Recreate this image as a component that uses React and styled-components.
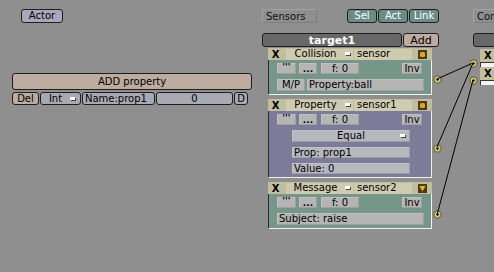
import React from 'react';
import styled, { createGlobalStyle, css } from 'styled-components';

const GlobalStyle = createGlobalStyle`
  html, body { margin: 0; padding: 0; background: #8f8f8f; }
  body { font-family: "DejaVu Sans", "Liberation Sans", sans-serif; font-size: 10px; color: #000; }
`;

const tones = {
  actor: '#aba6bd',
  tan: '#bdac9f',
  field: '#a8a9b3',
  teal: '#6b8d86',
  dark: '#686868',
  khaki: '#ccc9ae',
  flat: '#b4b5b4',
  lilac: '#b7b7bf',
};

const Canvas = styled.div`
  position: relative;
  width: 494px;
  height: 272px;
  overflow: hidden;
  display: flex;
  background: #8f8f8f;
`;

const LeftCol = styled.div`
  width: 262px;
  flex-shrink: 0;
  display: flex;
  flex-direction: column;
  padding-top: 9px;
`;

const Btn = styled.div`
  box-sizing: border-box;
  width: ${p => p.$w}px;
  height: ${p => p.$h || 13}px;
  flex-shrink: 0;
  display: flex;
  align-items: center;
  justify-content: ${p => (p.$left ? 'flex-start' : 'center')};
  padding: 0 ${p => (p.$left ? 2 : 0)}px;
  background: ${p => tones[p.$tone || 'field']};
  border: 1px solid #1e1e1e;
  border-radius: 3px;
  color: ${p => (p.$tone === 'teal' || p.$tone === 'dark' ? '#fff' : '#000')};
  white-space: nowrap;
  overflow: hidden;
  position: relative;
  line-height: 1;
  ${p => p.$bold && css`font-weight: bold;`}
  ${p => p.$flat && css`
    border: none;
    border-radius: 0;
    box-shadow: inset -1px -1px 0 rgba(0,0,0,0.12), inset 1px 1px 0 rgba(255,255,255,0.15);
  `}
`;

const PulseBtn = styled(Btn)`
  align-items: ${p => (p.$low ? 'flex-end' : 'flex-start')};
  font-weight: bold;
  font-size: 9px;
  line-height: 9px;
  overflow: visible;
`;

const MenuMark = styled.span`
  position: absolute;
  right: ${p => p.$r || 5}px;
  top: 50%;
  margin-top: -2px;
  width: 5px;
  height: 3px;
  background: #fff;
  box-shadow: 1px 1px 0 #444;
`;

const ActorRow = styled.div`
  padding-left: 21px;
`;

const PropBlock = styled.div`
  margin-top: 50px;
  padding-left: 12px;
  display: flex;
  flex-direction: column;
  gap: 2px;
`;

const PropRow = styled.div`
  display: flex;
  gap: 1px;
`;

const SensorsCol = styled.div`
  width: 211px;
  flex-shrink: 0;
  padding-top: 9px;
  display: flex;
  flex-direction: column;
`;

const HeadRow = styled.div`
  display: flex;
  align-items: center;
  height: 14px;
`;

const Label = styled.div`
  box-sizing: border-box;
  width: ${p => p.$w}px;
  height: 14px;
  display: flex;
  align-items: center;
  padding-left: 3px;
  border: 1px solid #a3a3a3;
  border-right-color: #7d7d7d;
  border-bottom-color: #7d7d7d;
  color: #111;
  white-space: nowrap;
  overflow: hidden;
`;

const Group = styled.div`
  display: flex;
  gap: 1px;
  margin-left: 30px;
`;

const TargetRow = styled.div`
  display: flex;
  gap: 1px;
  margin-top: 10px;
`;

const SensorList = styled.div`
  display: flex;
  flex-direction: column;
  gap: 4px;
  margin: 1px 0 0 6px;
`;

const SensorBox = styled.div`
  position: relative;
  width: 164px;
`;

const SensorHead = styled.div`
  box-sizing: border-box;
  height: 12px;
  display: flex;
  align-items: center;
  background: #c1be9f;
  padding-right: 5px;
`;

const Close = styled.div`
  width: 15px;
  height: 12px;
  display: flex;
  align-items: center;
  justify-content: center;
  font-weight: bold;
  font-size: 10px;
  margin-right: 3px;
`;

const HeadField = styled.div`
  box-sizing: border-box;
  width: ${p => p.$w}px;
  height: 11px;
  display: flex;
  align-items: center;
  justify-content: ${p => (p.$left ? 'flex-start' : 'center')};
  padding-left: ${p => (p.$left ? 3 : 0)}px;
  padding-right: ${p => (p.$left ? 0 : 8)}px;
  margin-right: 1px;
  background: #cfcbb1;
  position: relative;
  line-height: 1;
`;

const Spacer = styled.div`
  flex: 1;
`;

const SensorBody = styled.div`
  box-sizing: border-box;
  background: ${p => (p.$kind === 'purple' ? '#7c7c99' : '#76968a')};
  border-left: 1px solid #2c2c2c;
  border-right: 1px solid #f0f0f0;
  border-bottom: 1px solid #f0f0f0;
  padding: 3px 9px 3px 8px;
  display: flex;
  flex-direction: column;
  gap: ${p => p.$gap || 5}px;
`;

const BodyRow = styled.div`
  display: flex;
  align-items: center;
  gap: ${p => p.$gap || 0}px;
  padding-left: ${p => p.$indent || 0}px;
`;

const Dot = styled.div`
  position: absolute;
  left: ${p => p.$x}px;
  top: ${p => p.$y}px;
  width: 7px;
  height: 7px;
  border-radius: 50%;
  background: radial-gradient(circle at 50% 50%, #2a2a14 0 1px, #d6cf86 1.5px 2.3px, #8e8840 3px);
  box-shadow: 0 0 0 0.5px #5a5628;
`;

const CtrlCol = styled.div`
  flex: 1;
  padding-top: 9px;
  display: flex;
  flex-direction: column;
`;

const CtrlLabel = styled(Label)`
  width: 30px;
  border-right: none;
`;

const CtrlBar = styled.div`
  margin-top: 10px;
  height: 14px;
  box-sizing: border-box;
  width: 40px;
  background: #686868;
  border: 1px solid #1e1e1e;
  border-radius: 3px;
`;

const CtrlStack = styled.div`
  margin: 2px 0 0 7px;
  display: flex;
  flex-direction: column;
`;

const CtrlHead = styled.div`
  height: 13px;
  width: 30px;
  background: #c1be9f;
  display: flex;
  align-items: center;
  padding-left: 4px;
  box-sizing: border-box;
  font-weight: bold;
`;

const CtrlBody = styled.div`
  height: 4px;
  width: 30px;
  background: #f4f4f4;
  border-top: 1px solid #333;
  border-left: 1px solid #333;
`;

const Wires = styled.svg`
  position: absolute;
  left: 0;
  top: 0;
  pointer-events: none;
`;

const StateIcon = ({ down }) => (
  <svg width="9" height="9" viewBox="0 0 9 9">
    <rect x="0" y="0" width="9" height="9" fill="#4a3c18" />
    {down ? (
      <path d="M1.5 2 L7.5 2 L4.5 7.5 Z" fill="#e8b62a" />
    ) : (
      <rect x="2" y="2" width="5" height="5" rx="1.5" fill="#e0a42a" />
    )}
  </svg>
);

const PulseRow = () => (
  <BodyRow>
    <PulseBtn $flat $tone="flat" $w={19} $h={11}>'''</PulseBtn>
    <PulseBtn $flat $low $tone="flat" $w={18} $h={11} style={{ marginLeft: 3 }}>...</PulseBtn>
    <Btn $flat $tone="flat" $w={38} $h={11} style={{ marginLeft: 4 }}>f: 0</Btn>
    <Spacer />
    <Btn $flat $tone="flat" $w={20} $h={11}>Inv</Btn>
  </BodyRow>
);

const SensorHeader = ({ type, name, typeW, down }) => (
  <SensorHead>
    <Close>X</Close>
    <HeadField $w={typeW}>
      {type}
      <MenuMark $r={3} />
    </HeadField>
    <HeadField $w={58} $left>{name}</HeadField>
    <Spacer />
    <StateIcon down={down} />
  </SensorHead>
);

export default function App() {
  return (
    <>
      <GlobalStyle />
      <Canvas>
        <LeftCol>
          <ActorRow>
            <Btn $tone="actor" $w={42} $h={14}>Actor</Btn>
          </ActorRow>
          <PropBlock>
            <Btn $tone="tan" $w={240} $h={17}>ADD property</Btn>
            <PropRow>
              <Btn $tone="tan" $w={27}>Del</Btn>
              <Btn $w={41}>
                <span style={{ marginRight: 10 }}>Int</span>
                <MenuMark />
              </Btn>
              <Btn $w={73} $left>Name:prop1</Btn>
              <Btn $w={77}>0</Btn>
              <Btn $w={14}>D</Btn>
            </PropRow>
          </PropBlock>
        </LeftCol>

        <SensorsCol>
          <HeadRow>
            <Label $w={55}>Sensors</Label>
            <Group>
              <Btn $tone="teal" $w={30} $h={14}>Sel</Btn>
              <Btn $tone="teal" $w={30} $h={14}>Act</Btn>
              <Btn $tone="teal" $w={30} $h={14}>Link</Btn>
            </Group>
          </HeadRow>
          <TargetRow>
            <Btn $tone="dark" $bold $w={140} $h={14} style={{ fontSize: 11 }}>target1</Btn>
            <Btn $tone="tan" $w={36} $h={14} style={{ fontSize: 11 }}>Add</Btn>
          </TargetRow>
          <SensorList>
            <SensorBox>
              <SensorHeader type="Collision" name="sensor" typeW={67} />
              <SensorBody>
                <PulseRow />
                <BodyRow $gap={2}>
                  <Btn $flat $tone="flat" $w={28} $h={12}>M/P</Btn>
                  <Btn $flat $tone="flat" $w={117} $h={12} $left>Property:ball</Btn>
                </BodyRow>
              </SensorBody>
              <Dot $x={166} $y={28} />
            </SensorBox>

            <SensorBox>
              <SensorHeader type="Property" name="sensor1" typeW={67} />
              <SensorBody $kind="purple" $gap={5}>
                <PulseRow />
                <BodyRow $indent={15}>
                  <Btn $flat $tone="lilac" $w={118} $h={12}>
                    Equal
                    <MenuMark $r={5} />
                  </Btn>
                </BodyRow>
                <BodyRow $indent={15}>
                  <Btn $flat $tone="lilac" $w={118} $h={11} $left>Prop: prop1</Btn>
                </BodyRow>
                <BodyRow $indent={15}>
                  <Btn $flat $tone="lilac" $w={118} $h={11} $left>Value: 0</Btn>
                </BodyRow>
              </SensorBody>
              <Dot $x={166} $y={46} />
            </SensorBox>

            <SensorBox>
              <SensorHeader type="Message" name="sensor2" typeW={67} down />
              <SensorBody>
                <PulseRow />
                <BodyRow>
                  <Btn $flat $tone="flat" $w={147} $h={12} $left>Subject: raise</Btn>
                </BodyRow>
              </SensorBody>
              <Dot $x={166} $y={29} />
            </SensorBox>
          </SensorList>
        </SensorsCol>

        <CtrlCol>
          <CtrlLabel>Con</CtrlLabel>
          <CtrlBar />
          <CtrlStack>
            <CtrlHead>X</CtrlHead>
            <CtrlBody />
            <CtrlHead>X</CtrlHead>
            <CtrlBody />
          </CtrlStack>
          <Dot $x={470} $y={60} />
          <Dot $x={470} $y={77} />
        </CtrlCol>

        <Wires width="494" height="272">
          <line x1="437" y1="79" x2="473" y2="63" stroke="#000" strokeWidth="1" />
          <line x1="437" y1="147" x2="473" y2="63" stroke="#000" strokeWidth="1" />
          <line x1="437" y1="215" x2="473" y2="80" stroke="#000" strokeWidth="1" />
        </Wires>
      </Canvas>
    </>
  );
}
